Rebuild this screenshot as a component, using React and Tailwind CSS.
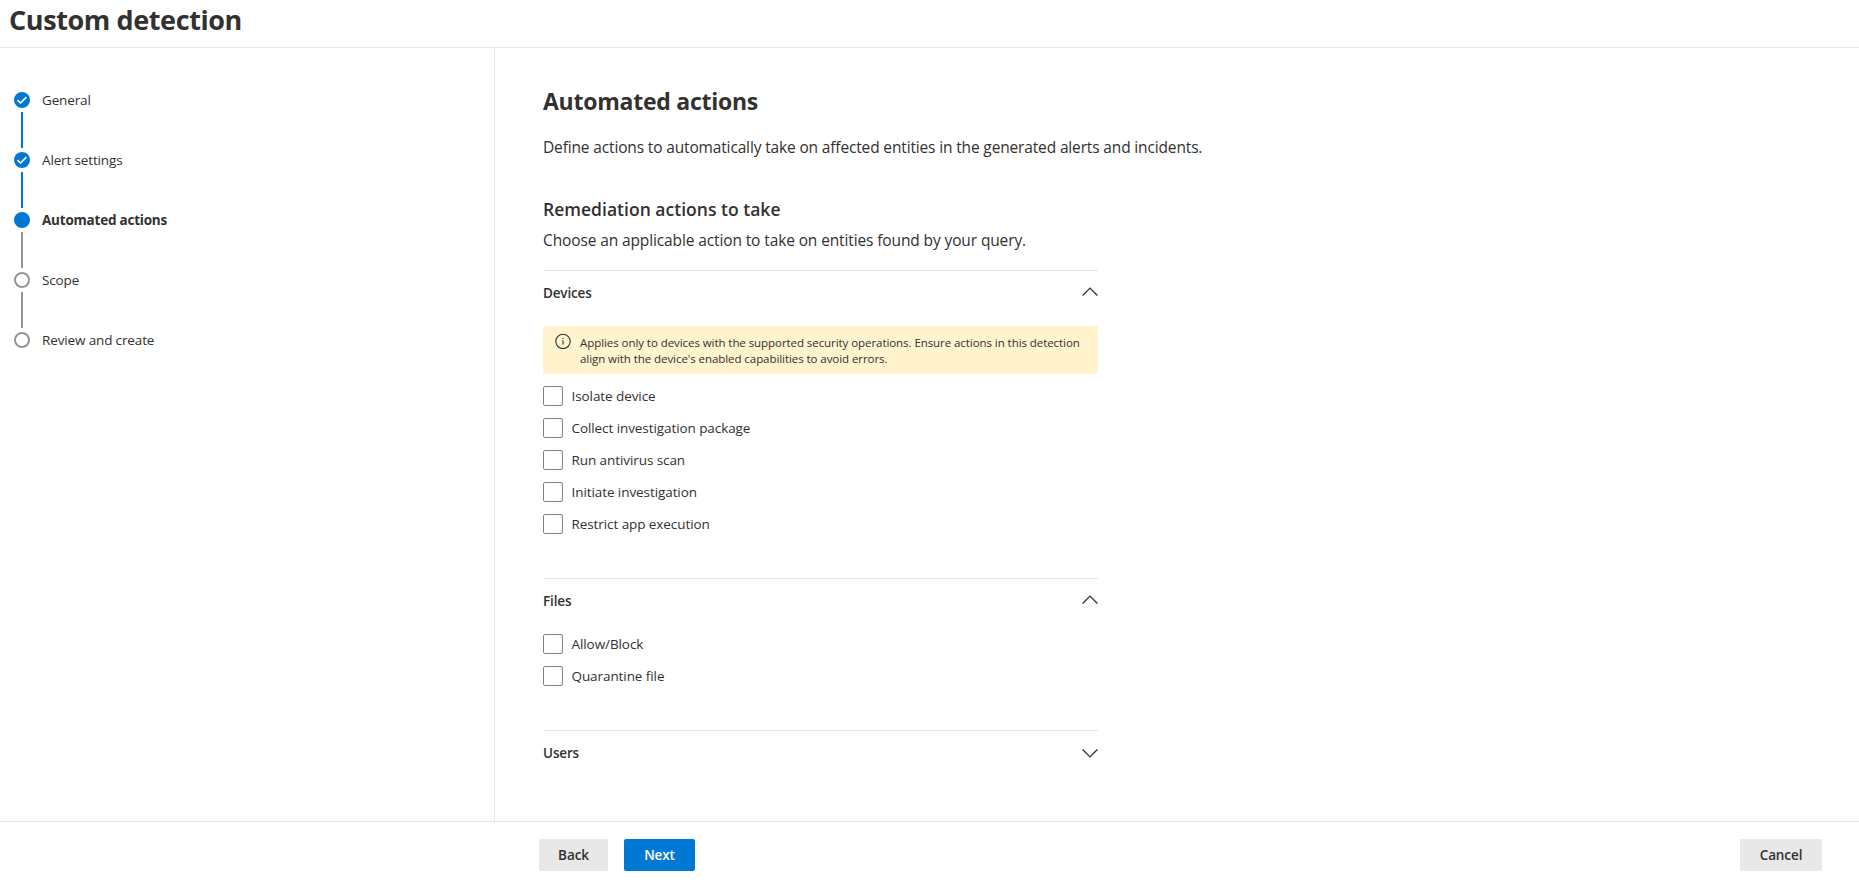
import { useState } from "react";

const STEPS = [
  { label: "General", state: "done" },
  { label: "Alert settings", state: "done" },
  { label: "Automated actions", state: "current" },
  { label: "Scope", state: "todo" },
  { label: "Review and create", state: "todo" },
];

const DEVICE_ACTIONS = [
  "Isolate device",
  "Collect investigation package",
  "Run antivirus scan",
  "Initiate investigation",
  "Restrict app execution",
];

const FILE_ACTIONS = ["Allow/Block", "Quarantine file"];

function StepIcon({ state }) {
  if (state === "todo") return <span className="size-4 rounded-full border-2 border-[#979593]" />;
  return (
    <span className="size-4 rounded-full bg-[#0078d4]">
      {state === "done" && (
        <svg viewBox="0 0 16 16" className="size-4" fill="none" stroke="white" strokeWidth="1.6">
          <path d="M3.5 8.2 6.5 11 12.4 5.1" />
        </svg>
      )}
    </span>
  );
}

function Step({ label, state, last }) {
  return (
    <li className="flex gap-3">
      <div className="flex w-4 flex-col items-center">
        <StepIcon state={state} />
        {!last && <span className={`my-1 h-9 w-0.5 ${state === "done" ? "bg-[#0078d4]" : "bg-[#979593]"}`} />}
      </div>
      <span className={`h-4 text-[13.5px] leading-4 ${state === "current" ? "font-bold tracking-[-0.22px]" : "tracking-[-0.14px]"}`}>
        {label}
      </span>
    </li>
  );
}

function Chevron({ open }) {
  return (
    <svg viewBox="0 0 16 16" className={`size-4 ${open ? "mb-0.5" : "rotate-180"}`} fill="none" stroke="#323130" strokeWidth="1.3">
      <path d="M0.6 11.5 8 4.1 15.4 11.5" />
    </svg>
  );
}

function Section({ title, open, onToggle, children }) {
  return (
    <section className="border-t border-[#e6e6e6]">
      <button onClick={onToggle} className="flex h-[43px] w-full items-center justify-between">
        <span className="text-[13.5px] leading-5 font-semibold tracking-[-0.15px]">{title}</span>
        <Chevron open={open} />
      </button>
      {open && children}
    </section>
  );
}

function Checkbox({ label, checked, onChange }) {
  return (
    <label className="flex h-5 items-center gap-[8.5px]">
      <input
        type="checkbox"
        checked={checked}
        onChange={onChange}
        className="size-5 shrink-0 appearance-none rounded-[2px] border border-[#858381] checked:bg-[#0078d4]"
      />
      <span className="text-[13.5px] leading-5 tracking-[-0.08px]">{label}</span>
    </label>
  );
}

export default function App() {
  const [open, setOpen] = useState({ devices: true, files: true, users: false });
  const [selected, setSelected] = useState([]);

  const toggleSection = (id) => setOpen({ ...open, [id]: !open[id] });
  const toggleAction = (name) =>
    setSelected(selected.includes(name) ? selected.filter((s) => s !== name) : [...selected, name]);

  const renderActions = (actions) => (
    <div className="flex flex-col gap-3">
      {actions.map((a) => (
        <Checkbox key={a} label={a} checked={selected.includes(a)} onChange={() => toggleAction(a)} />
      ))}
    </div>
  );

  return (
    <div className="flex h-screen flex-col overflow-hidden bg-white font-['Open_Sans','Noto_Sans',sans-serif] text-[#323130]">
      <header className="h-12 shrink-0 border-b border-[#e6e6e6] pl-[9px]">
        <h1 className="text-[27px] leading-10 font-bold tracking-[-0.4px]">Custom detection</h1>
      </header>

      <div className="flex min-h-0 flex-1">
        <aside className="w-[495px] shrink-0 border-r border-[#e6e6e6] pt-11 pl-3.5">
          <ol>
            {STEPS.map((s, i) => (
              <Step key={s.label} {...s} last={i === STEPS.length - 1} />
            ))}
          </ol>
        </aside>

        <main className="flex-1 pt-[37px] pl-12">
          <h2 className="text-[23px] leading-8 font-bold tracking-[-0.25px]">Automated actions</h2>
          <p className="mt-[18px] text-[15.5px] leading-6 tracking-[-0.15px]">
            Define actions to automatically take on affected entities in the generated alerts and incidents.
          </p>
          <h3 className="mt-9 text-[17.5px] leading-7 font-semibold tracking-[0.02px]">Remediation actions to take</h3>
          <p className="mt-[5px] text-[15.5px] leading-6 tracking-[-0.12px]">
            Choose an applicable action to take on entities found by your query.
          </p>

          <div className="mt-[18px] w-[555px]">
            <Section title="Devices" open={open.devices} onToggle={() => toggleSection("devices")}>
              <div className="mt-3 mb-3 flex h-12 bg-[#fff4ce] pl-3">
                <svg viewBox="0 0 16 16" className="mt-[7px] size-4 shrink-0" fill="none" stroke="#323130">
                  <circle cx="8" cy="8.4" r="7.2" strokeWidth="1.1" />
                  <path d="M8 7.2v4.4M8 4.9V6" strokeWidth="1.1" />
                </svg>
                <p className="pt-[9px] pl-[9px] text-[11.5px] leading-4 tracking-[-0.065px]">
                  Applies only to devices with the supported security operations. Ensure actions in this detection
                  <br />
                  align with the device's enabled capabilities to avoid errors.
                </p>
              </div>
              {renderActions(DEVICE_ACTIONS)}
              <div className="h-11" />
            </Section>
            <Section title="Files" open={open.files} onToggle={() => toggleSection("files")}>
              <div className="pt-3 pb-11">{renderActions(FILE_ACTIONS)}</div>
            </Section>
            <Section title="Users" open={open.users} onToggle={() => toggleSection("users")} />
          </div>
        </main>
      </div>

      <footer className="flex h-[61px] shrink-0 items-start border-t border-[#e6e6e6] pt-[17px] pr-[37px] pl-[539px] text-[13.5px] font-semibold tracking-[-0.1px]">
        <button className="h-8 w-[69px] rounded-[2px] bg-[#e8e8e8]">Back</button>
        <button className="ml-4 h-8 w-[71px] rounded-[2px] bg-[#0078d4] text-white">Next</button>
        <button className="ml-auto h-8 w-[82px] rounded-[2px] bg-[#e8e8e8]">Cancel</button>
      </footer>
    </div>
  );
}
